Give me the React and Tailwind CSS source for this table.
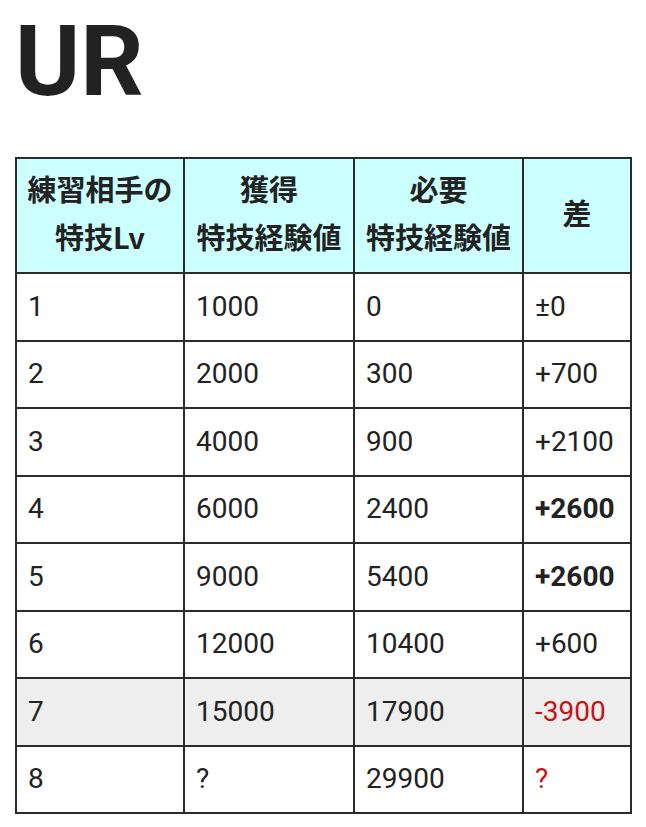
const ROWS = [
  { lv: '1', get: '1000', need: '0', diff: '±0' },
  { lv: '2', get: '2000', need: '300', diff: '+700' },
  { lv: '3', get: '4000', need: '900', diff: '+2100' },
  { lv: '4', get: '6000', need: '2400', diff: '+2600', bold: true },
  { lv: '5', get: '9000', need: '5400', diff: '+2600', bold: true },
  { lv: '6', get: '12000', need: '10400', diff: '+600' },
  { lv: '7', get: '15000', need: '17900', diff: '-3900', red: true, gray: true },
  { lv: '8', get: '?', need: '29900', diff: '?', red: true },
];

export default function App() {
  return (
    <div className="min-h-[827px] bg-white pl-[15px] pt-[12px] text-[#222]" style={{ fontFamily: 'Roboto, "Noto Sans CJK JP", sans-serif' }}>
      <h1 className="text-[99px] font-bold leading-none">UR</h1>

      <table className="mt-[46px] w-[615px] table-fixed border-collapse border-[2.5px] border-[#2b2b2b]">
        <colgroup>
          <col className="w-[168px]" />
          <col className="w-[170px]" />
          <col className="w-[169px]" />
          <col className="w-[108px]" />
        </colgroup>
        <thead>
          <tr className="h-[115px] bg-[#ccffff] text-[29px] font-bold leading-[48px]" style={{ fontFamily: '"Noto Sans CJK JP", sans-serif' }}>
            <th className="border-[2.5px] border-[#2b2b2b] p-0 pb-[8px] text-center align-middle">練習相手の<br />特技Lv</th>
            <th className="border-[2.5px] border-[#2b2b2b] p-0 pb-[8px] text-center align-middle">獲得<br />特技経験値</th>
            <th className="border-[2.5px] border-[#2b2b2b] p-0 pb-[8px] text-center align-middle">必要<br />特技経験値</th>
            <th className="border-[2.5px] border-[#2b2b2b] p-0 pb-[8px] text-center align-middle">差</th>
          </tr>
        </thead>
        <tbody>
          {ROWS.map((r) => (
            <tr key={r.lv} className={`h-[67.5px] text-[28px] ${r.gray ? 'bg-[#eeeeee]' : ''}`}>
              <td className="border-[2.5px] border-[#2b2b2b] pl-[11px] align-middle">{r.lv}</td>
              <td className="border-[2.5px] border-[#2b2b2b] pl-[11px] align-middle">{r.get}</td>
              <td className="border-[2.5px] border-[#2b2b2b] pl-[11px] align-middle">{r.need}</td>
              <td className={`border-[2.5px] border-[#2b2b2b] pl-[11px] pr-0 align-middle whitespace-nowrap ${r.bold ? 'font-bold' : ''} ${r.red ? 'text-[#cc1111]' : ''}`}>{r.diff}</td>
            </tr>
          ))}
        </tbody>
      </table>
    </div>
  );
}
